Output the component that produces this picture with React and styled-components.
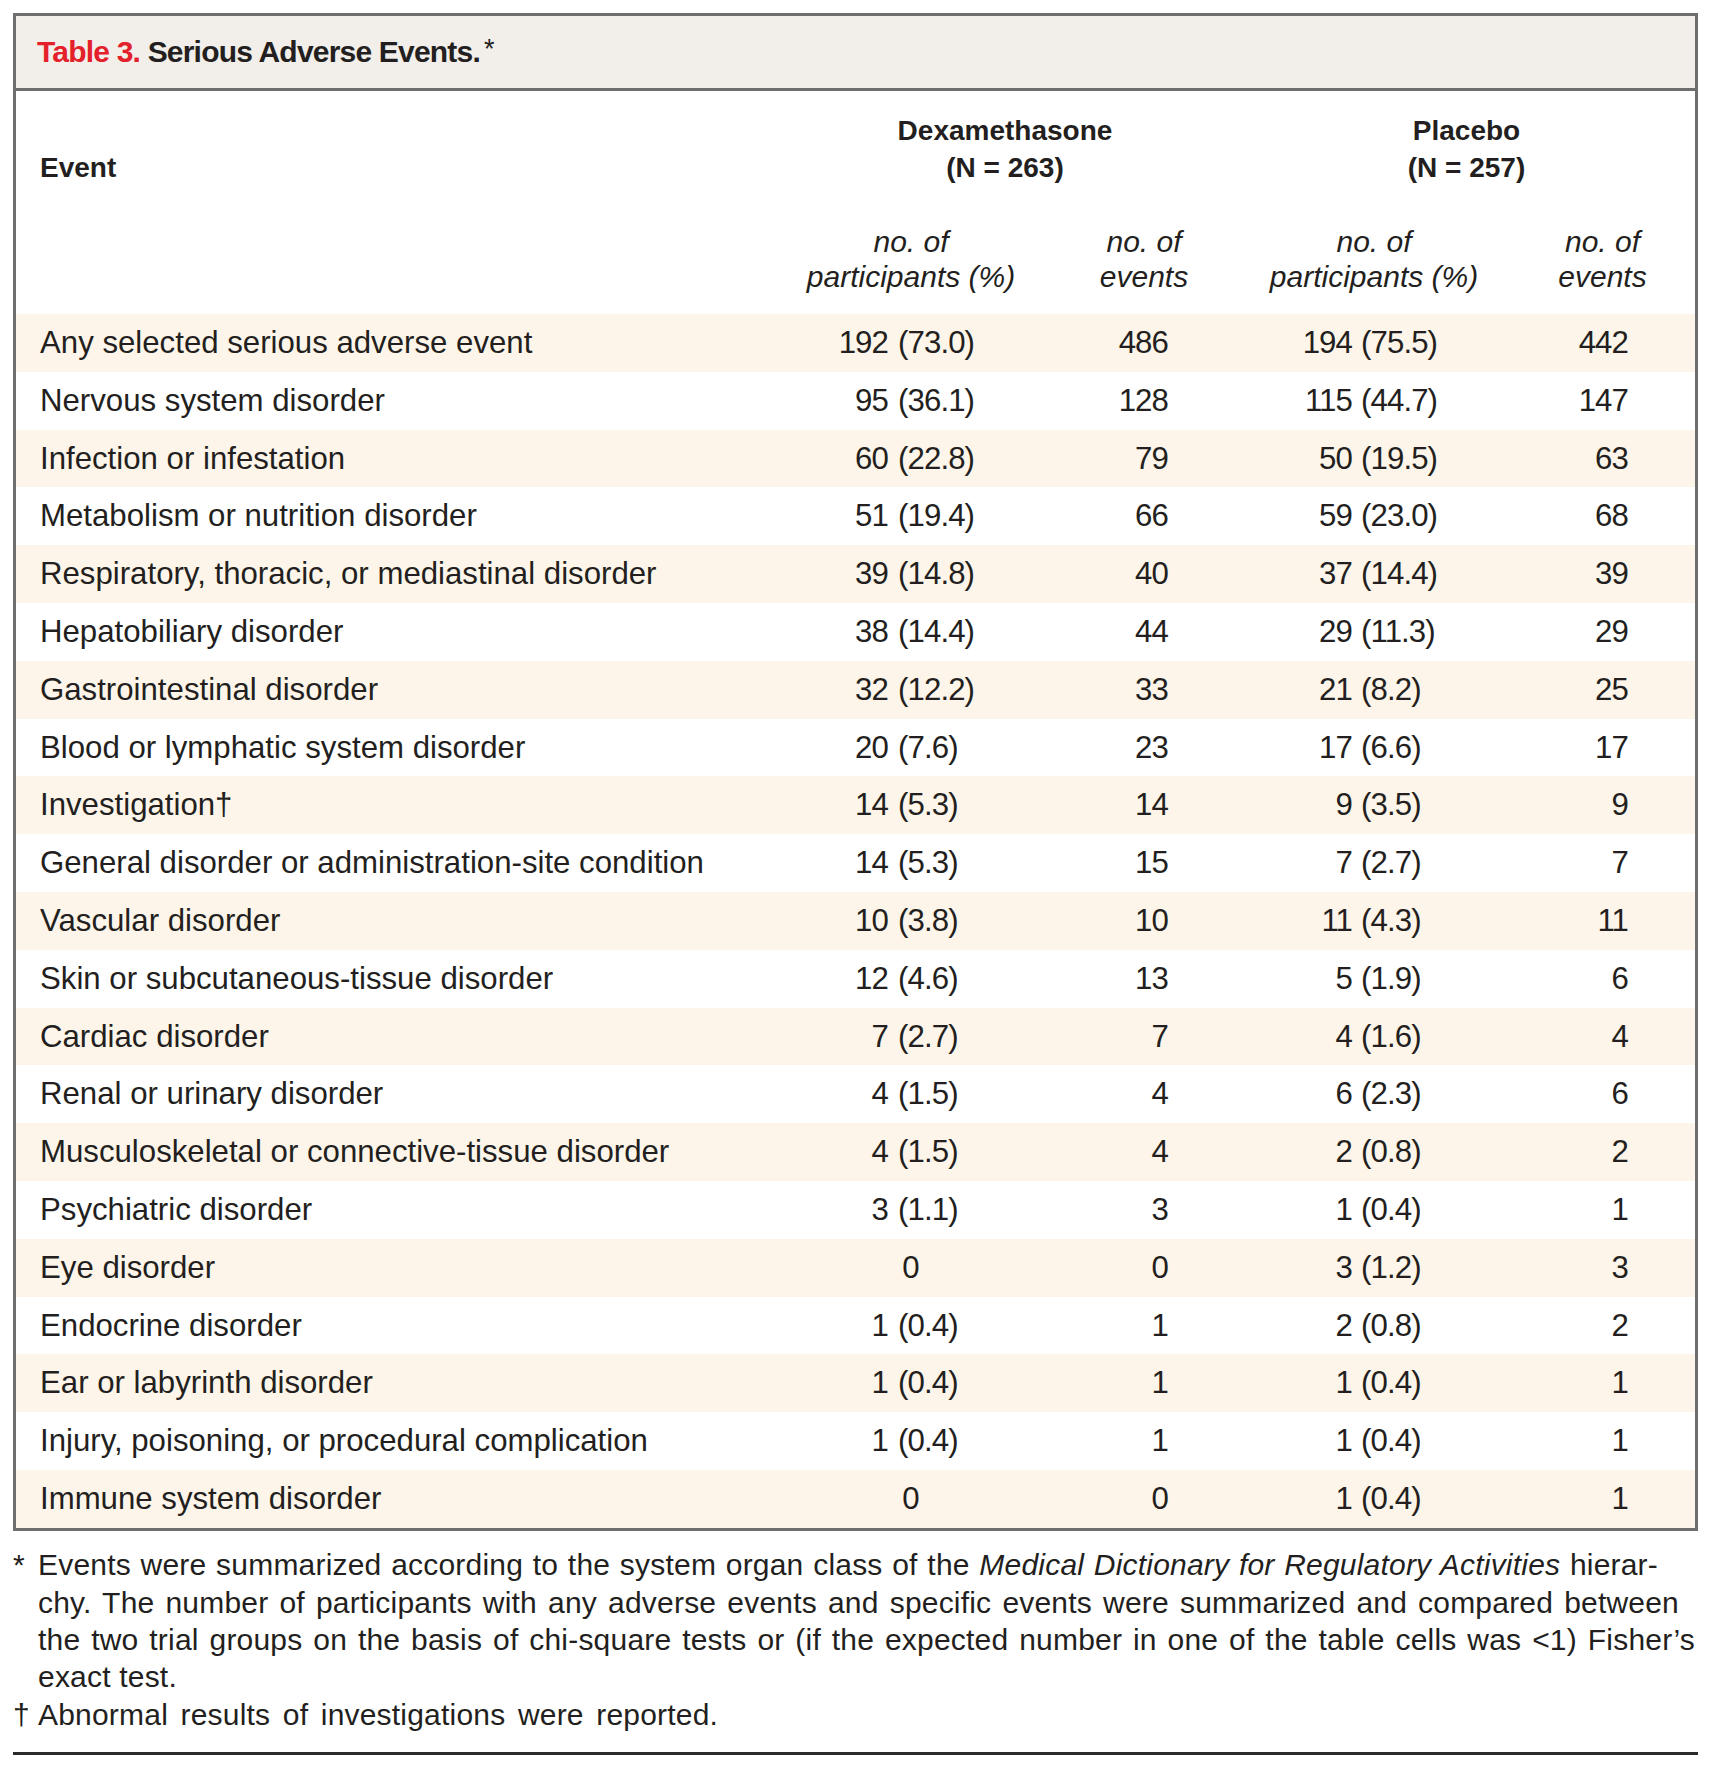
import React from "react";
import styled, { createGlobalStyle } from "styled-components";

const colors = {
  ink: "#231f20",
  red: "#e4202b",
  rule: "#6e6e6e",
  band: "#f2eee9",
  stripe: "#fdf5e9",
};

const rows = [
  ["Any selected serious adverse event", "192", "73.0", "486", "194", "75.5", "442"],
  ["Nervous system disorder", "95", "36.1", "128", "115", "44.7", "147"],
  ["Infection or infestation", "60", "22.8", "79", "50", "19.5", "63"],
  ["Metabolism or nutrition disorder", "51", "19.4", "66", "59", "23.0", "68"],
  ["Respiratory, thoracic, or mediastinal disorder", "39", "14.8", "40", "37", "14.4", "39"],
  ["Hepatobiliary disorder", "38", "14.4", "44", "29", "11.3", "29"],
  ["Gastrointestinal disorder", "32", "12.2", "33", "21", "8.2", "25"],
  ["Blood or lymphatic system disorder", "20", "7.6", "23", "17", "6.6", "17"],
  ["Investigation\u2020", "14", "5.3", "14", "9", "3.5", "9"],
  ["General disorder or administration-site condition", "14", "5.3", "15", "7", "2.7", "7"],
  ["Vascular disorder", "10", "3.8", "10", "11", "4.3", "11"],
  ["Skin or subcutaneous-tissue disorder", "12", "4.6", "13", "5", "1.9", "6"],
  ["Cardiac disorder", "7", "2.7", "7", "4", "1.6", "4"],
  ["Renal or urinary disorder", "4", "1.5", "4", "6", "2.3", "6"],
  ["Musculoskeletal or connective-tissue disorder", "4", "1.5", "4", "2", "0.8", "2"],
  ["Psychiatric disorder", "3", "1.1", "3", "1", "0.4", "1"],
  ["Eye disorder", "0", null, "0", "3", "1.2", "3"],
  ["Endocrine disorder", "1", "0.4", "1", "2", "0.8", "2"],
  ["Ear or labyrinth disorder", "1", "0.4", "1", "1", "0.4", "1"],
  ["Injury, poisoning, or procedural complication", "1", "0.4", "1", "1", "0.4", "1"],
  ["Immune system disorder", "0", null, "0", "1", "0.4", "1"],
];

const GlobalStyle = createGlobalStyle`
  body {
    margin: 0;
    background: #fff;
    color: ${colors.ink};
    font-family: "Liberation Sans", Arial, sans-serif;
  }
`;

const Page = styled.div`
  padding: 13px 13px 12px;
`;

const TableBox = styled.div`
  border: 3px solid ${colors.rule};
`;

const TitleBar = styled.div`
  height: 72px;
  padding-left: 21px;
  background: ${colors.band};
  border-bottom: 3px solid ${colors.rule};
  font-size: 30px;
  font-weight: 700;
  letter-spacing: -0.8px;
  line-height: 72px;
  white-space: nowrap;
`;

const Label = styled.span`
  color: ${colors.red};
`;

const Star = styled.sup`
  font-size: 27px;
  font-weight: 400;
  vertical-align: 4px;
  line-height: 0;
  margin-left: 4px;
`;

// shared column layout for the head and every body row
const Grid = styled.div`
  display: grid;
  grid-template-columns: 756px 278px 188px 272px 1fr;
`;

const HeadGrid = styled(Grid)`
  padding: 21px 0 20px;
  row-gap: 38px;
`;

const EventHead = styled.div`
  grid-row: 1;
  grid-column: 1;
  align-self: end;
  padding-left: 24px;
  font-size: 28px;
  font-weight: 700;
  line-height: 37px;
`;

const GroupHead = styled.div`
  grid-row: 1;
  grid-column: ${(p) => p.$col} / span 2;
  text-align: center;
  font-size: 28px;
  font-weight: 700;
  line-height: 37px;
`;

const SubHead = styled.div`
  grid-row: 2;
  grid-column: ${(p) => p.$col};
  text-align: center;
  font-size: 30px;
  font-style: italic;
  line-height: 35px;
`;

const Row = styled(Grid)`
  height: 57.8px;
  background: ${(p) => (p.$shade ? colors.stripe : "#fff")};
  font-size: 31.2px;
  line-height: 57.8px;
  white-space: nowrap;
`;

const EventName = styled.div`
  padding-left: 24px;
`;

const Share = styled.div`
  display: grid;
  grid-template-columns: ${(p) => p.$count}px auto;
  column-gap: ${(p) => p.$gap}px;
  letter-spacing: -0.9px;
`;

const Count = styled.span`
  text-align: right;
`;

const Zero = styled.div`
  text-align: center;
`;

const Events = styled.div`
  text-align: right;
  padding-right: ${(p) => p.$right}px;
  letter-spacing: -0.9px;
`;

const Notes = styled.div`
  margin-top: 15.7px;
  font-size: 30px;
  letter-spacing: 0.2px;
  line-height: 37.3px;
`;

const Note = styled.div`
  display: flex;
`;

const Mark = styled.span`
  flex: none;
  width: 25px;
`;

const NoteBody = styled.div`
  flex: 1;
`;

const Line = styled.span`
  display: block;
  white-space: nowrap;
  word-spacing: ${(p) => p.$spread || 0}px;
  ${(p) =>
    p.$width &&
    `
    width: ${p.$width}px;
    text-align: justify;
    text-align-last: justify;
  `}
`;

const Rule = styled.div`
  margin-top: 18.8px;
  height: 3px;
  background: #2b2b2b;
`;

function ShareCell({ count, pct, countWidth, gap }) {
  if (pct === null) return <Zero>{count}</Zero>;
  return (
    <Share $count={countWidth} $gap={gap}>
      <Count>{count}</Count>
      <span>({pct})</span>
    </Share>
  );
}

export default function App() {
  return (
    <>
      <GlobalStyle />
      <Page>
        <TableBox>
          <TitleBar>
            <Label>Table 3.</Label> Serious Adverse Events.<Star>*</Star>
          </TitleBar>

          <HeadGrid>
            <EventHead>Event</EventHead>
            <GroupHead $col={2}>
              Dexamethasone
              <br />
              (N = 263)
            </GroupHead>
            <GroupHead $col={4}>
              Placebo
              <br />
              (N = 257)
            </GroupHead>
            <SubHead $col={2}>
              no. of
              <br />
              participants (%)
            </SubHead>
            <SubHead $col={3}>
              no. of
              <br />
              events
            </SubHead>
            <SubHead $col={4}>
              no. of
              <br />
              participants (%)
            </SubHead>
            <SubHead $col={5}>
              no. of
              <br />
              events
            </SubHead>
          </HeadGrid>

          {rows.map((r, i) => (
            <Row key={r[0]} $shade={i % 2 === 0}>
              <EventName>{r[0]}</EventName>
              <ShareCell count={r[1]} pct={r[2]} countWidth={116} gap={10} />
              <Events $right={70}>{r[3]}</Events>
              <ShareCell count={r[4]} pct={r[5]} countWidth={114} gap={9} />
              <Events $right={67}>{r[6]}</Events>
            </Row>
          ))}
        </TableBox>

        <Notes>
          <Note>
            <Mark>*</Mark>
            <NoteBody>
              <Line $width={1620}>
                Events were summarized according to the system organ class of the{" "}
                <i>Medical Dictionary for Regulatory Activities</i> hierar-
              </Line>
              <Line $width={1641}>
                chy. The number of participants with any adverse events and specific events were
                summarized and compared between
              </Line>
              <Line $width={1657}>
                the two trial groups on the basis of chi-square tests or (if the expected number in
                one of the table cells was {"<1)"} Fisher’s
              </Line>
              <Line>exact test.</Line>
            </NoteBody>
          </Note>
          <Note>
            <Mark>†</Mark>
            <NoteBody>
              <Line $spread={4}>Abnormal results of investigations were reported.</Line>
            </NoteBody>
          </Note>
        </Notes>
        <Rule />
      </Page>
    </>
  );
}
